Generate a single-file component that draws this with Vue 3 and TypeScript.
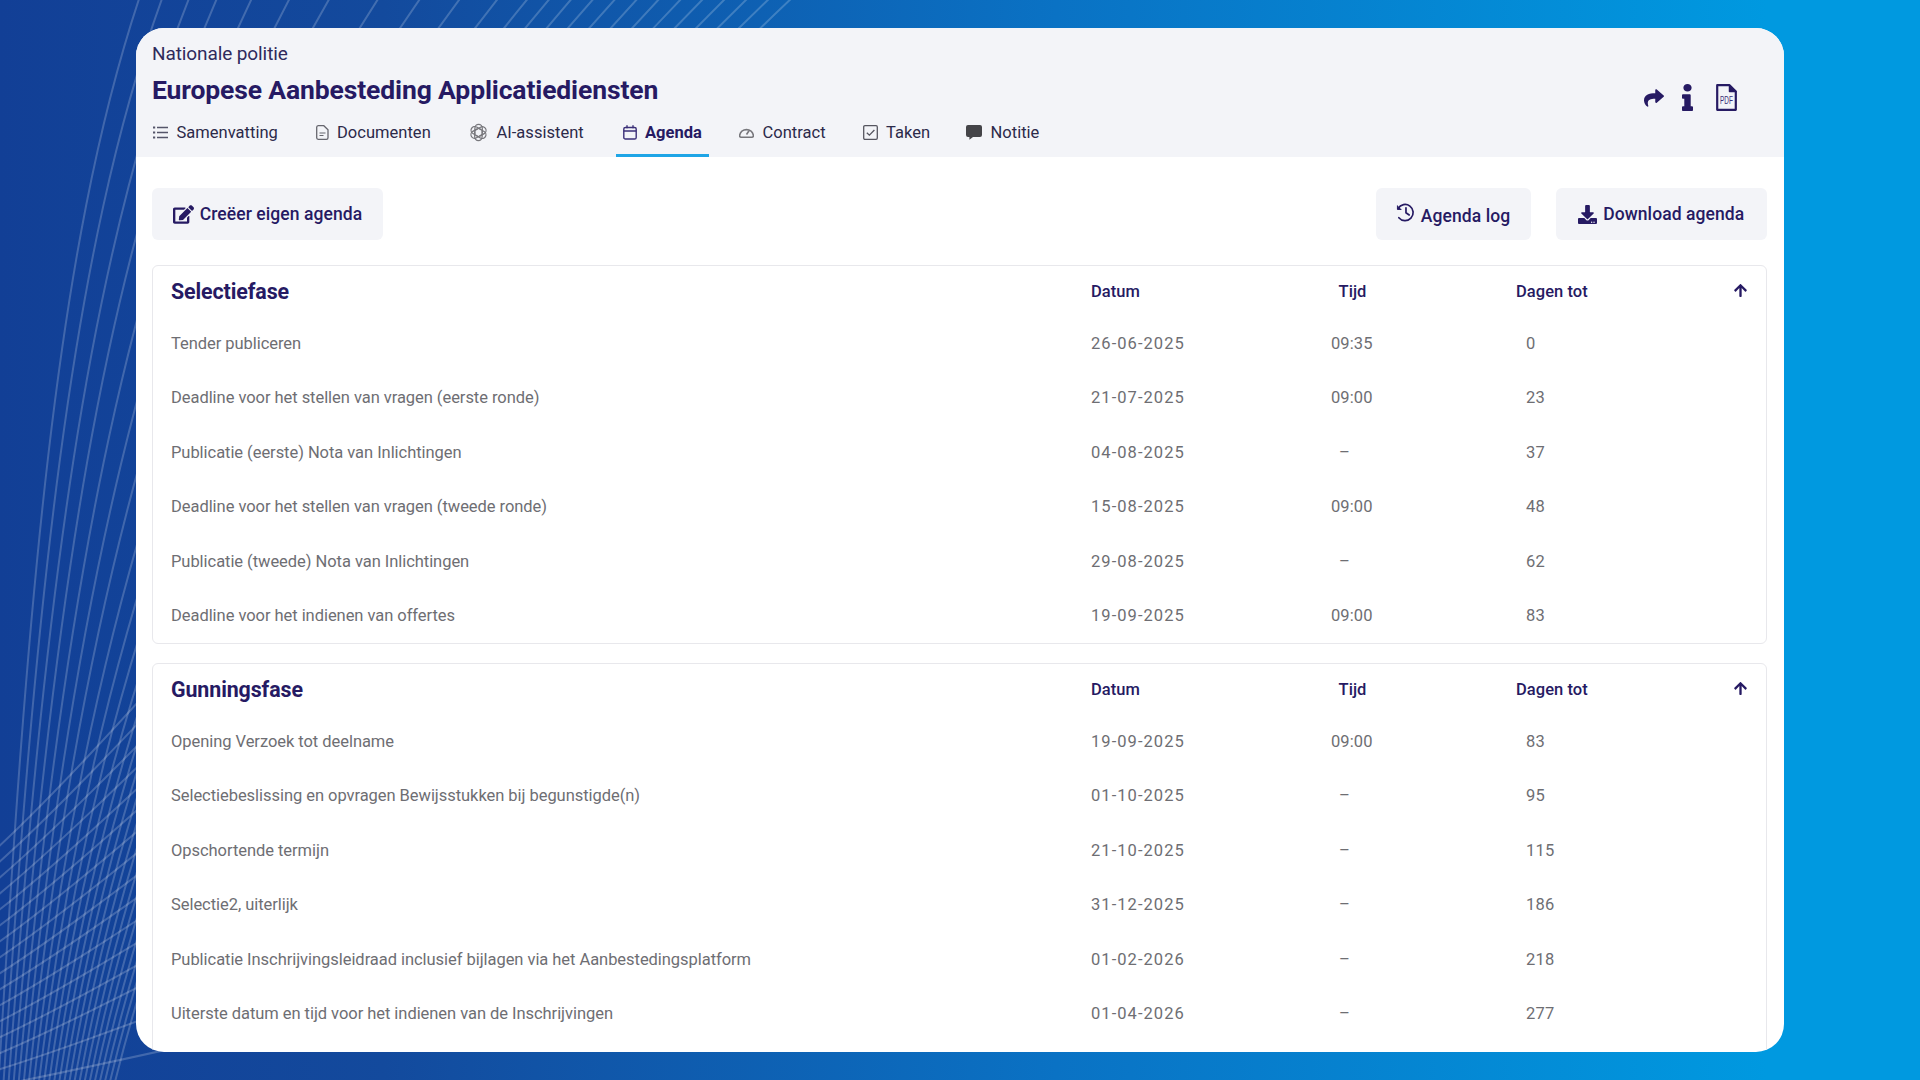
<script setup lang="ts">
interface Row { label: string; date: string; time: string; days: string }
interface Section { title: string; rows: Row[] }

const sections: Section[] = [
  {
    title: 'Selectiefase',
    rows: [
      { label: 'Tender publiceren', date: '26-06-2025', time: '09:35', days: '0' },
      { label: 'Deadline voor het stellen van vragen (eerste ronde)', date: '21-07-2025', time: '09:00', days: '23' },
      { label: 'Publicatie (eerste) Nota van Inlichtingen', date: '04-08-2025', time: '–', days: '37' },
      { label: 'Deadline voor het stellen van vragen (tweede ronde)', date: '15-08-2025', time: '09:00', days: '48' },
      { label: 'Publicatie (tweede) Nota van Inlichtingen', date: '29-08-2025', time: '–', days: '62' },
      { label: 'Deadline voor het indienen van offertes', date: '19-09-2025', time: '09:00', days: '83' },
    ],
  },
  {
    title: 'Gunningsfase',
    rows: [
      { label: 'Opening Verzoek tot deelname', date: '19-09-2025', time: '09:00', days: '83' },
      { label: 'Selectiebeslissing en opvragen Bewijsstukken bij begunstigde(n)', date: '01-10-2025', time: '–', days: '95' },
      { label: 'Opschortende termijn', date: '21-10-2025', time: '–', days: '115' },
      { label: 'Selectie2, uiterlijk', date: '31-12-2025', time: '–', days: '186' },
      { label: 'Publicatie Inschrijvingsleidraad inclusief bijlagen via het Aanbestedingsplatform', date: '01-02-2026', time: '–', days: '218' },
      { label: 'Uiterste datum en tijd voor het indienen van de Inschrijvingen', date: '01-04-2026', time: '–', days: '277' },
    ],
  },
]

const tabs = ['Samenvatting', 'Documenten', 'AI-assistent', 'Agenda', 'Contract', 'Taken', 'Notitie']

const tops = [140, 163, 190, 218, 253, 291, 331, 380, 422, 462, 500, 530, 552, 574, 596, 618, 640, 662, 684, 706, 728, 750, 772, 794]
const wavesA: string[] = tops.map((t, i) => {
  const u = i / (tops.length - 1)
  const p1x = 55 + (t - 140) * 0.62
  const p1y = 250 + 60 * u
  const p2x = 28 + 190 * u
  const p2y = 600 + 60 * u
  const p3x = -2 + 115 * u
  return `M${t} -4C${p1x} ${p1y} ${p2x} ${p2y} ${p3x} 1090`
})

function slopeAt(y: number): number {
  if (y < 960) return 0.98 - ((y - 850) / 110) * 0.26
  if (y < 1055) return 0.72 - ((y - 960) / 95) * 0.27
  return Math.max(0.2, 0.45 - ((y - 1055) / 30) * 0.25)
}
const wavesB: string[] = Array.from({ length: 16 }, (_, i) => {
  const y = 845 + i * 16
  const s = slopeAt(y)
  return `M-6 ${y + 6 * s}C50 ${y - 46 * s} 110 ${y - 112 * s} 260 ${y - 280 * s}`
})
</script>

<template>
  <div class="page">
    <svg class="waves" viewBox="0 0 1920 1080" width="1920" height="1080" aria-hidden="true">
      <path v-for="(d, i) in wavesA" :key="'a' + i" :d="d" />
      <path v-for="(d, i) in wavesB" :key="'b' + i" :d="d" />
    </svg>

    <main class="panel">
      <header class="head">
        <div class="head-left">
          <div class="org">Nationale politie</div>
          <h1 class="title">Europese Aanbesteding Applicatiediensten</h1>
          <nav class="tabs">
            <a v-for="(t, i) in tabs" :key="t" class="tab" :class="{ active: t === 'Agenda' }">
              <svg v-if="i === 0" class="ti" width="15" height="13" viewBox="0 0 15 13" fill="none" stroke="#55556a" stroke-width="1.4">
                <path d="M4 1.5h11M4 6.5h11M4 11.5h11" />
                <path d="M0 1.5h2.2M0 6.5h2.2M0 11.5h2.2" stroke-width="1.8" />
              </svg>
              <svg v-else-if="i === 1" class="ti" width="13" height="15" viewBox="0 0 13 15" fill="none" stroke="#66666e" stroke-width="1.3">
                <path d="M2.2.7h5.6l4.2 4v8a1.6 1.6 0 0 1-1.6 1.6H2.2A1.6 1.6 0 0 1 .7 12.7V2.3A1.6 1.6 0 0 1 2.2.7z" />
                <path d="M3.5 8h6M3.5 10.5h4" stroke-width="1.2" />
              </svg>
              <svg v-else-if="i === 2" class="ti" width="19" height="19" viewBox="0 0 20 20" fill="none" stroke="#77777c" stroke-width="1.3">
                <path
                  v-for="r in [0, 60, 120, 180, 240, 300]"
                  :key="r"
                  d="M6.2 12.2V5.4a3.9 3.9 0 0 1 7.800 0v5.800"
                  :transform="`rotate(${r} 10 10)`"
                />
              </svg>
              <svg v-else-if="i === 3" class="ti" width="14" height="15" viewBox="0 0 14 15" fill="none" stroke="#3b2f78" stroke-width="1.4">
                <rect x=".8" y="2.5" width="12.4" height="11.5" rx="1.6" />
                <path d="M.8 6h12.4M4 .3v3M10 .3v3" />
              </svg>
              <svg v-else-if="i === 4" class="ti" width="15" height="11" viewBox="0 0 15 11" fill="none" stroke="#77777c" stroke-width="1.6">
                <path d="M2.2 10.2H12.8c1 0 1.6-.6 1.6-1.8A7 7 0 0 0 .6 8.4c0 1.200.6 1.800 1.600 1.800z" />
                <path d="M7.500 7.500 10 3.800" />
              </svg>
              <svg v-else-if="i === 5" class="ti" width="15" height="15" viewBox="0 0 15 15" fill="none" stroke="#55555f" stroke-width="1.3">
                <rect x=".7" y=".7" width="13.600" height="13.600" rx="1.200" />
                <path d="m3.800 7.700 2.600 2.500 5-5.200" />
              </svg>
              <svg v-else class="ti" width="16" height="15" viewBox="0 0 16 15">
                <path fill="#444448" d="M2 0h12a2 2 0 0 1 2 2v8a2 2 0 0 1-2 2H7l-3.600 2.800V12H2a2 2 0 0 1-2-2V2a2 2 0 0 1 2-2z" />
              </svg>
              <span>{{ t }}</span>
            </a>
          </nav>
        </div>
        <div class="head-icons">
          <svg class="share" width="20" height="20" viewBox="0 0 512 512"><path fill="#261a63" d="M503.691 189.836L327.687 37.851C312.281 24.546 288 35.347 288 56.015v80.053C127.371 137.907 0 170.1 0 322.326c0 61.441 39.581 122.309 83.333 154.132 13.653 9.931 33.111-2.533 28.077-18.631C66.066 312.814 132.917 274.316 288 272.085V360c0 20.7 24.3 31.453 39.687 18.164l176.004-152c11.071-9.562 11.086-26.753 0-36.328z" /></svg>
          <svg class="info" width="11" height="27" viewBox="0 0 192 512" preserveAspectRatio="none"><path fill="#261a63" d="M20 424.229h20V279.771H20c-11.046 0-20-8.954-20-20V212c0-11.046 8.954-20 20-20h112c11.046 0 20 8.954 20 20v212.229h20c11.046 0 20 8.954 20 20V492c0 11.046-8.954 20-20 20H20c-11.046 0-20-8.954-20-20v-47.771c0-11.046 8.954-20 20-20zM96 0C56.235 0 24 32.235 24 72s32.235 72 72 72 72-32.235 72-72S135.764 0 96 0z" /></svg>
          <svg class="pdf" width="21" height="27" viewBox="0 0 21 27" fill="none">
            <path d="M1.200 1.200h12.300l6.300 6.300v18.300H1.200z" stroke="#261a63" stroke-width="2.200" stroke-linejoin="round" />
            <path d="M13.500 1.200v6.300h6.300z" fill="#261a63" stroke="#261a63" stroke-width="1.500" stroke-linejoin="round" />
            <text transform="translate(4 20) scale(.56 1)" class="pdf-text">PDF</text>
          </svg>
        </div>
      </header>

      <section class="body">
        <div class="toolbar">
          <button class="btn create" type="button">
            <svg width="21" height="19" viewBox="0 0 576 512"><path fill="#261a63" d="M402.6 83.2l90.2 90.2c3.8 3.8 3.8 10 0 13.8L274.4 405.6l-92.8 10.3c-12.4 1.4-22.9-9.1-21.5-21.5l10.3-92.8L388.8 83.2c3.8-3.8 10-3.8 13.8 0zm162-22.9l-48.8-48.8c-15.2-15.2-39.9-15.2-55.2 0l-35.4 35.4c-3.8 3.8-3.8 10 0 13.8l90.2 90.2c3.8 3.8 10 3.8 13.8 0l35.4-35.4c15.2-15.3 15.2-40 0-55.2zM384 346.2V448H64V128h229.800c3.200 0 6.200-1.300 8.500-3.500l40-40c7.600-7.600 2.200-20.500-8.500-20.500H48C21.500 64 0 85.500 0 112v352c0 26.500 21.500 48 48 48h352c26.500 0 48-21.500 48-48V306.200c0-10.700-12.900-16-20.500-8.500l-40 40c-2.200 2.300-3.500 5.300-3.500 8.500z" /></svg>
            <span>Creëer eigen agenda</span>
          </button>
          <div class="toolbar-right">
            <button class="btn log" type="button">
              <svg class="hist" width="19" height="19" viewBox="0 0 20 20" fill="none" stroke="#261a63" stroke-width="1.800">
                <path d="M3 15.500A8.500 8.500 0 1 0 2.200 5.800" stroke-linecap="round" />
                <path d="M1.500 2.600v4.200h4.200" stroke-linejoin="round" fill="#261a63" stroke-width="1" />
                <path d="M10.500 5v5.300l3.400 2.300" stroke-linecap="round" />
              </svg>
              <span class="log-label">Agenda log</span>
            </button>
            <button class="btn dl" type="button">
              <svg width="19" height="19" viewBox="0 0 512 512"><path fill="#261a63" d="M216 0h80c13.300 0 24 10.700 24 24v168h87.700c17.800 0 26.700 21.500 14.100 34.100L269.700 378.300c-7.500 7.500-19.800 7.500-27.300 0L90.100 226.100c-12.600-12.600-3.700-34.100 14.100-34.100H192V24c0-13.300 10.700-24 24-24zm296 376v112c0 13.300-10.700 24-24 24H24c-13.300 0-24-10.700-24-24V376c0-13.300 10.700-24 24-24h146.700l49 49c20.100 20.100 52.500 20.100 72.600 0l49-49H488c13.300 0 24 10.700 24 24zm-124 88c0-11-9-20-20-20s-20 9-20 20 9 20 20 20 20-9 20-20zm64 0c0-11-9-20-20-20s-20 9-20 20 9 20 20 20 20-9 20-20z" /></svg>
              <span>Download agenda</span>
            </button>
          </div>
        </div>

        <div v-for="s in sections" :key="s.title" class="card">
          <div class="grid card-head">
            <h2 class="card-title">{{ s.title }}</h2>
            <span class="col-h">Datum</span>
            <span class="col-h tijd-h">Tijd</span>
            <span class="col-h dagen-h">Dagen tot</span>
            <svg class="arrow" width="13" height="15" viewBox="0 0 448 512"><path fill="#261a63" d="M34.900 289.500l-22.200-22.200c-9.400-9.400-9.400-24.600 0-33.900L207 39c9.400-9.400 24.600-9.400 33.900 0l194.300 194.300c9.400 9.400 9.400 24.600 0 33.900L413 289.400c-9.500 9.500-25 9.300-34.300-.4L264 168.600V456c0 13.300-10.700 24-24 24h-32c-13.300 0-24-10.700-24-24V168.600L69.200 289.100c-9.300 9.800-24.800 10-34.300.4z" /></svg>
          </div>
          <div v-for="r in s.rows" :key="r.label" class="grid row">
            <span>{{ r.label }}</span>
            <span class="date">{{ r.date }}</span>
            <span :class="r.time === '–' ? 'dash' : 'time'">{{ r.time }}</span>
            <span class="days">{{ r.days }}</span>
          </div>
        </div>
      </section>
    </main>
  </div>
</template>

<style>
html, body { margin: 0; }
</style>

<style scoped>
.page {
  position: relative;
  width: 1920px;
  height: 1080px;
  box-sizing: border-box;
  padding: 28px 136px;
  overflow: hidden;
  background: linear-gradient(90deg, #123f96 0%, #134a9d 20%, #0a72c4 55%, #0099e0 92%);
  font-family: Roboto, "Liberation Sans", sans-serif;
}
.waves {
  position: absolute;
  left: 0;
  top: 0;
  fill: none;
  stroke: rgba(255, 255, 255, 0.2);
  stroke-width: 2;
}
.panel {
  position: relative;
  width: 1648px;
  height: 1024px;
  border-radius: 28px;
  overflow: hidden;
  background: #fff;
}
.head {
  display: flex;
  justify-content: space-between;
  height: 129px;
  padding: 14px 0 0 16px;
  box-sizing: border-box;
  background: #f3f4f8;
}
.org {
  font-size: 19px;
  line-height: 24px;
  color: #2f2a5c;
  letter-spacing: -0.1px;
}
.title {
  margin: 6px 0 0;
  font-size: 26.5px;
  line-height: 36px;
  font-weight: 700;
  color: #261a63;
  letter-spacing: -0.13px;
}
.tabs {
  display: grid;
  grid-template-columns: 139px 130px 130px 93px 100px 80px 88px;
  column-gap: 23.500px;
  margin-left: -6px;
  height: 49px;
}
.tab {
  display: flex;
  align-items: center;
  gap: 8.500px;
  padding: 2px 0 0 7px;
  box-sizing: border-box;
  height: 49px;
  border-bottom: 3px solid transparent;
  font-size: 16.500px;
  color: #2c2a4a;
  letter-spacing: 0.02px;
  white-space: nowrap;
}
.tab.active {
  border-bottom-color: #1ea5e6;
  color: #261a63;
  font-weight: 700;
}
.ti { flex: none; }
.head-icons {
  display: flex;
  align-items: center;
  align-self: flex-start;
  height: 27px;
  margin: 42px 47px 0 0;
}
.info { margin-left: 18px; }
.pdf { margin-left: 23px; }
.pdf-text {
  font-family: "Liberation Sans", sans-serif;
  font-size: 11.500px;
  fill: #3a3078;
}
.body { padding: 31px 17.500px 0 16px; }
.toolbar {
  display: flex;
  justify-content: space-between;
  margin-bottom: 25px;
}
.toolbar-right { display: flex; gap: 25.500px; }
.btn {
  display: flex;
  align-items: center;
  justify-content: center;
  gap: 6px;
  height: 52px;
  padding: 0;
  border: 0;
  border-radius: 6px;
  background: #f3f4f8;
  color: #261a63;
  font-family: inherit;
  font-size: 17.500px;
  font-weight: 500;
  letter-spacing: 0.08px;
}
.create { width: 231px; }
.log { width: 155px; }
.dl { width: 210.500px; }
.hist { margin-bottom: 4px; }
.log-label { padding-top: 4px; }
.card {
  border: 1px solid #e8e8ec;
  border-radius: 6px;
  margin-bottom: 19px;
  padding-right: 15.500px;
}
.card:last-child { padding-bottom: 30px; }
.grid {
  display: grid;
  grid-template-columns: 920px 240px 185px 1fr 20px;
  align-items: center;
  padding-left: 18px;
}
.card-head { height: 50px; }
.card-title {
  margin: 0;
  font-size: 21.400px;
  font-weight: 700;
  color: #261a63;
  letter-spacing: -0.1px;
}
.col-h {
  font-size: 16.500px;
  font-weight: 500;
  color: #261a63;
  letter-spacing: 0.06px;
}
.tijd-h {
  display: block;
  width: 43px;
  text-align: center;
}
.arrow { justify-self: center; margin-bottom: 1px; }
.row {
  height: 54.500px;
  font-size: 16.500px;
  color: #6e6e73;
  letter-spacing: -0.05px;
}
.date { letter-spacing: 1.050px; }
.time { letter-spacing: 0.100px; }
.dash { padding-left: 8px; }
.days { padding-left: 10px; letter-spacing: 0.200px; }
</style>
